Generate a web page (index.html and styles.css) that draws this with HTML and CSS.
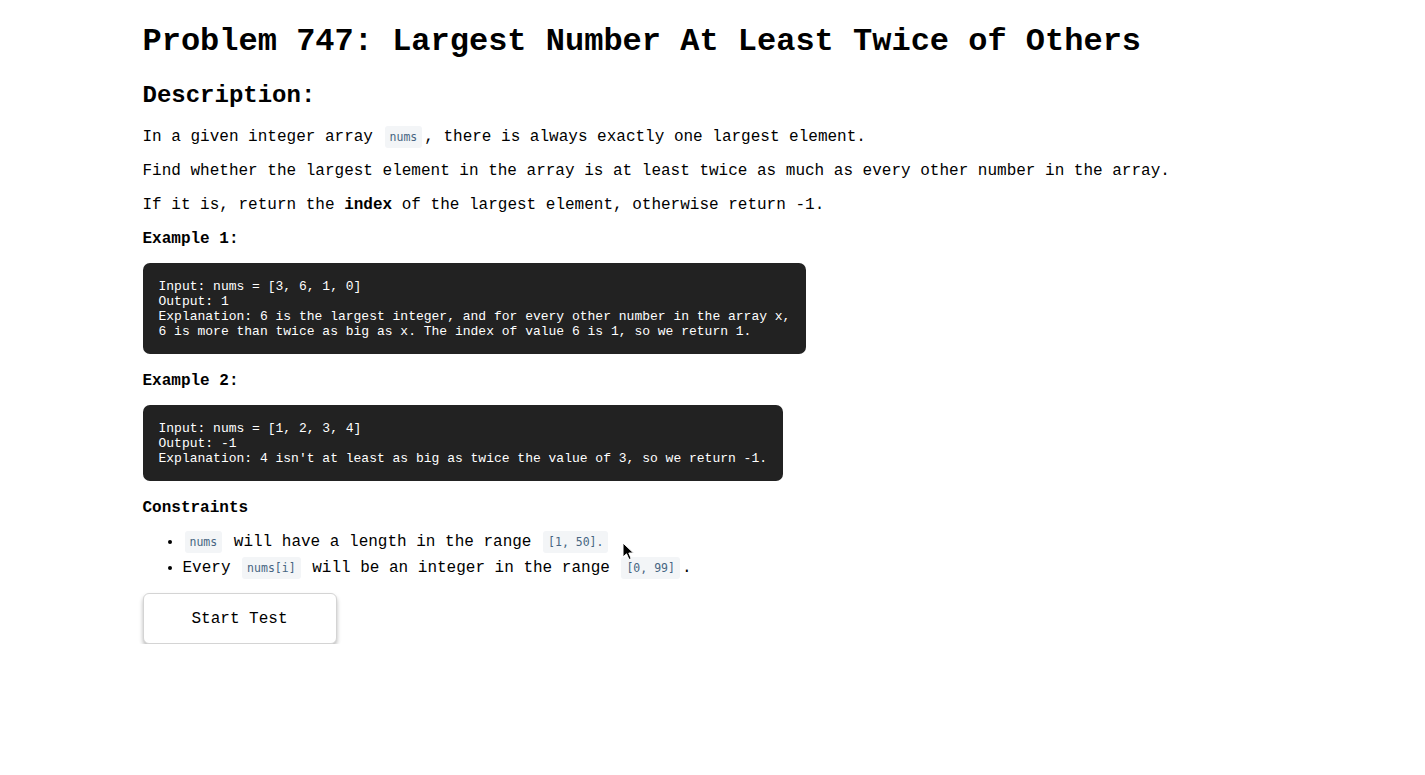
FILE: index.html
```html
<!DOCTYPE html>
<html>
<head>
<meta charset="utf-8">
<link rel="stylesheet" href="styles.css">
</head>
<body>
<div class="container">
  <h1 class="title">Problem 747: Largest Number At Least Twice of Others</h1>
  <h2 class="section">Description:</h2>
  <p class="text">In a given integer array <code class="ic">nums</code>, there is always exactly one largest element.</p>
  <p class="text">Find whether the largest element in the array is at least twice as much as every other number in the array.</p>
  <p class="text">If it is, return the <strong>index</strong> of the largest element, otherwise return -1.</p>
  <p class="text label"><strong>Example 1:</strong></p>
  <pre class="block">Input: nums = [3, 6, 1, 0]
Output: 1
Explanation: 6 is the largest integer, and for every other number in the array x,
6 is more than twice as big as x. The index of value 6 is 1, so we return 1.</pre>
  <p class="text label"><strong>Example 2:</strong></p>
  <pre class="block">Input: nums = [1, 2, 3, 4]
Output: -1
Explanation: 4 isn't at least as big as twice the value of 3, so we return -1.</pre>
  <p class="text cons"><strong>Constraints</strong></p>
  <ul class="list">
    <li><code class="ic">nums</code> will have a length in the range <code class="ic">[1, 50].</code></li>
    <li>Every <code class="ic">nums[i]</code> will be an integer in the range <code class="ic">[0, 99]</code>.</li>
  </ul>
  <button class="btn">Start Test</button>
</div>
<svg class="cursor" width="13" height="20" viewBox="0 0 13 20"><path d="M1 1 L1 15 L4.5 11.8 L7 17.5 L9.2 16.6 L6.8 11 L11.5 11 Z" fill="#000" stroke="#fff" stroke-width="1"/></svg>
</body>
</html>
```
FILE: styles.css
```css
html, body {
  margin: 0;
  padding: 0;
  background: #fff;
}
body {
  font-family: "Liberation Mono", "Courier New", monospace;
  color: #000;
  font-size: 16px;
}
.container {
  max-width: 1140px;
  margin: 0 auto;
}
.title {
  font-size: 32px;
  line-height: 37px;
  margin: 23px 0 22px;
  font-weight: bold;
}
.section {
  font-size: 24px;
  line-height: 28px;
  margin: 22px 0 18px;
  font-weight: bold;
}
.text {
  margin: 16px 0;
  line-height: 18px;
}
.text.label {
  margin-bottom: 15px;
}
.text.cons {
  margin-bottom: 12px;
}
.ic {
  font-family: "DejaVu Sans Mono", "Liberation Mono", monospace;
  font-size: 11.5px;
  color: #476582;
  background: #f3f5f7;
  padding: 4px 5px;
  border-radius: 3px;
  margin: 0 2px;
}
.block {
  display: inline-block;
  margin: 0 0 2px;
  background: #222;
  color: #fff;
  font-family: "Liberation Mono", "Courier New", monospace;
  font-size: 13px;
  line-height: 15px;
  padding: 16px 16px 15px;
  border-radius: 7px;
}
.list {
  margin: 0 0 12px;
  padding-left: 40px;
}
.list li {
  line-height: 26px;
}
.btn {
  display: block;
  width: 194px;
  height: 51px;
  background: #fff;
  border: 1px solid #d4d4d4;
  border-radius: 6px;
  box-shadow: 0 3px 4px rgba(0,0,0,0.28);
  font-family: "Liberation Mono", "Courier New", monospace;
  font-size: 16px;
  color: #000;
  cursor: pointer;
}
.cursor {
  position: absolute;
  left: 622px;
  top: 542px;
}
```
